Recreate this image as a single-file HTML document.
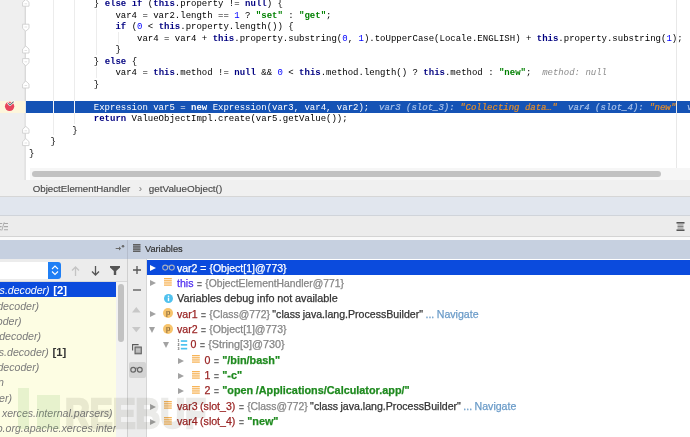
<!DOCTYPE html>
<html><head><meta charset="utf-8">
<style>
*{margin:0;padding:0;box-sizing:border-box}
html,body{width:690px;height:437px;overflow:hidden;background:#fff;position:relative}
body>*{will-change:transform}
.a{position:absolute}
#ed{left:0;top:0;width:690px;height:180px;background:#fff;overflow:hidden}
#gut{left:0;top:0;width:25px;height:180px;background:#efefef;border-right:1px solid #e6e6e6}
.ln{position:absolute;left:29px;height:11.5px;line-height:11.5px;padding-top:1.7px;font-family:"Liberation Mono",monospace;font-size:9px;color:#000;white-space:pre}
.k{color:#000080;font-weight:bold}
.n{color:#0000ff}
.s{color:#008000;font-weight:bold}
.h{color:#8c8c8c;font-style:italic}
.guide{position:absolute;width:1px;background:#ececec}
.sel{left:26px;top:101px;width:664px;height:11.5px;background:#1553b5}
.ui{font-family:"Liberation Sans",sans-serif}
</style></head><body>
<div id="ed" class="a">
  <div id="gut" class="a"></div>
  <div class="a" style="left:0;top:101px;width:25px;height:11.5px;background:#fdf6dc"></div>
  <div class="a sel"></div>
  <!-- indent guides -->
  <div class="guide" style="left:52.5px;top:0;height:135px"></div>
  <div class="guide" style="left:74px;top:0;height:124px"></div><div class="a" style="left:74px;top:101px;width:1px;height:11.5px;background:rgba(255,255,255,0.5)"></div><div class="a" style="left:52.5px;top:101px;width:1px;height:11.5px;background:rgba(255,255,255,0.5)"></div>
  <div class="guide" style="left:96px;top:9px;height:46px"></div>
  <div class="guide" style="left:96px;top:66.5px;height:11.5px"></div>
  <div class="guide" style="left:118px;top:32px;height:11.5px"></div>
  <!-- right margin -->
  <div class="guide" style="left:676.3px;top:0;height:168px;background:#e8e8e8"></div>

  <div class="ln" style="top:-2.5px">            } <span class="k">else if</span> (<span class="k">this</span>.property != <span class="k">null</span>) {</div>
  <div class="ln" style="top:9px">                var4 = var2.length == <span class="n">1</span> ? <span class="s">"set"</span> : <span class="s">"get"</span>;</div>
  <div class="ln" style="top:20.5px">                <span class="k">if</span> (<span class="n">0</span> &lt; <span class="k">this</span>.property.length()) {</div>
  <div class="ln" style="top:32px">                    var4 = var4 + <span class="k">this</span>.property.substring(<span class="n">0</span>, <span class="n">1</span>).toUpperCase(Locale.ENGLISH) + <span class="k">this</span>.property.substring(<span class="n">1</span>);</div>
  <div class="ln" style="top:43.5px">                }</div>
  <div class="ln" style="top:55px">            } <span class="k">else</span> {</div>
  <div class="ln" style="top:66.5px">                var4 = <span class="k">this</span>.method != <span class="k">null</span> &amp;&amp; <span class="n">0</span> &lt; <span class="k">this</span>.method.length() ? <span class="k">this</span>.method : <span class="s">"new"</span>;  <span class="h">method: null</span></div>
  <div class="ln" style="top:78px">            }</div>
  <div class="ln" style="top:101px;color:#fff">            Expression var5 = <b>new</b> Expression(var3, var4, var2);  <span style="font-style:italic;color:#a9c2ea;margin-left:-1px;-webkit-text-stroke:0.2px currentColor">var3 (slot_3): <span style="color:#e58e2a">"Collecting data…"</span>  var4 (slot_4): <span style="color:#e58e2a">"new"</span>  v</span></div>
  <div class="ln" style="top:112.5px">            <span class="k">return</span> ValueObjectImpl.create(var5.getValue());</div>
  <div class="ln" style="top:124px">        }</div>
  <div class="ln" style="top:135.5px">    }</div>
  <div class="ln" style="top:147px">}</div>

  <!-- breakpoint -->
  <svg class="a" style="left:0;top:98px" width="25" height="16" viewBox="0 0 25 16"><circle cx="9.6" cy="8.35" r="4.65" fill="#e8455b"/><path d="M8.3 5.2L10 6.9L13.6 3.6" fill="none" stroke="#fff" stroke-width="2.2" stroke-linecap="round" stroke-linejoin="round"/><path d="M8.3 5.2L10 6.9L13.6 3.6" fill="none" stroke="#6b7272" stroke-width="1.1"/></svg>
  <!-- fold outline -->
  <div class="a" style="left:25px;top:0;width:1px;height:180px;background:#e3e3e3"></div>
  <div class="a" style="left:25px;top:0;width:1px;height:101px;background:#d9d9d9"></div>
  <div class="a" style="left:25px;top:133px;width:1px;height:6px;background:#d9d9d9"></div>
  <svg class="a" style="left:21.5px;top:0" width="8" height="150" viewBox="0 0 8 150">
    <g fill="#fff" stroke="#cfcfcf" stroke-width="0.9">
      <path d="M0.6 6.2V2.2L3.8 -0.6L7 2.2V6.2Z"/>
      <path d="M0.6 24.2V28.4L3.8 31.2L7 28.4V24.2Z"/>
      <path d="M0.6 53V49L3.8 46L7 49V53Z"/>
      <path d="M0.6 58.6V62.8L3.8 65.8L7 62.8V58.6Z"/>
      <path d="M0.6 88V84L3.8 81L7 84V88Z"/>
      <path d="M0.6 133.2V129.2L3.8 126.4L7 129.2V133.2Z"/>
      <path d="M0.6 145.6V141.6L3.8 138.6L7 141.6V145.6Z"/>
    </g>
    <g stroke="#d6d6d6" stroke-width="0.7">
      <path d="M2.5 3.8H5.1M2.5 27H5.1M2.5 50.5H5.1M2.5 61.8H5.1M2.5 85.5H5.1M2.5 130.8H5.1M2.5 143H5.1"/>
    </g>
  </svg>

  <!-- h scrollbar -->
  <div class="a" style="left:29.7px;top:168.2px;width:661px;height:11.4px;background:#f6f6f6"></div>
  <div class="a" style="left:31.6px;top:171px;width:629.4px;height:6.1px;border-radius:3px;background:#c2c2c2"></div>
</div>

<!-- breadcrumb -->
<div class="a ui" style="left:0;top:179.6px;width:690px;height:17.4px;background:#f0f0f0;border-bottom:1px solid #d6d6d6;font-size:9.7px;color:#4a4a4a;line-height:16px;-webkit-text-stroke:0.15px #4a4a4a">
  <span class="a" style="left:32.8px;top:1.1px">ObjectElementHandler</span>
  <span class="a" style="left:139px;top:1.1px;color:#999;font-size:9px">›</span>
  <span class="a" style="left:148.8px;top:1.1px;font-size:9.9px">getValueObject()</span>
</div>
<!-- toolbar 1 -->
<div class="a" style="left:0;top:197px;width:690px;height:19px;background:#e1e6ee;border-bottom:1px solid #d0d4da"></div>
<!-- toolbar 2 -->
<div class="a" style="left:0;top:216px;width:690px;height:21px;background:#ececec;border-bottom:1px solid #d4d4d4"></div>
<!-- header -->
<div class="a" style="left:0;top:237px;width:690px;height:3px;background:#fafafa"></div>
<div class="a ui" style="left:0;top:240px;width:690px;height:19px;background:#c6d0e0"></div>
<div class="a" style="left:126.5px;top:240px;width:1px;height:19px;background:#b4bccb"></div><div class="a" style="left:126.5px;top:259px;width:1px;height:178px;background:#cfcfcf"></div>
<span class="a ui" style="left:145px;top:242px;font-size:9.2px;line-height:14px;color:#333;-webkit-text-stroke:0.2px #333">Variables</span>

<!-- frames toolbar -->
<div class="a" style="left:0;top:259px;width:126.5px;height:23px;background:#ececec;border-bottom:1px solid #d8d8d8"></div>
<div class="a" style="left:0;top:262px;width:48px;height:16.5px;background:#fff"></div>
<div class="a" style="left:48px;top:262px;width:13px;height:16.5px;background:#1f7ff5;border-radius:0 3px 3px 0"></div>
<!-- frames list -->
<div class="a" style="left:0;top:282px;width:116px;height:155px;background:#fdfde3"></div>
<div class="a" style="left:0;top:282.2px;width:116px;height:15.2px;background:#0b4bdd"></div>
<style>
.fr{position:absolute;left:0;height:15.33px;line-height:15.33px;padding-top:0.8px;display:flex;justify-content:flex-end;overflow:hidden;white-space:pre;font-family:"Liberation Sans",sans-serif;font-size:10.6px;font-style:italic;color:#7a7a7a}
.fr b{font-style:normal;color:#333;font-size:11.3px;margin-left:0.6px}
</style>
<div class="fr" style="top:282.2px;width:67px;color:#fff">com.sun.beans.decoder) <b style="color:#fff">[2]</b></div>
<div class="fr" style="top:297.5px;width:39px">(com.sun.beans.decoder)</div>
<div class="fr" style="top:312.8px;width:21.5px">(com.sun.beans.decoder)</div>
<div class="fr" style="top:328.2px;width:41px">(com.sun.beans.decoder)</div>
<div class="fr" style="top:343.5px;width:66.2px">com.sun.beans.decoder) <b>[1]</b></div>
<div class="fr" style="top:358.8px;width:39.3px">(com.sun.beans.decoder)</div>
<div class="fr" style="top:374.2px;width:4px">(java.lang.reflect.Method.invokin</div>
<div class="fr" style="top:389.5px;width:12px">(sun.reflect.misc.Trampoliner)</div>
<div class="fr" style="top:404.8px;width:112.6px">(com.sun.org.apache  xerces.internal.parsers)</div>
<div class="fr" style="top:420.2px;width:116px;justify-content:flex-start;overflow:hidden"><span style="margin-left:-3.3px">o.org.apache.xerces.internal.parsers)</span></div>

<div class="a" style="left:116px;top:282px;width:10.5px;height:155px;background:#f2f2f2"></div>
<div class="a" style="left:118px;top:284px;width:6px;height:58px;border-radius:3px;background:#c2c2c2"></div>

<!-- var toolbar -->
<div class="a" style="left:127.5px;top:259px;width:19px;height:178px;background:#ececec;border-right:1px solid #d6d6d6"></div>
<div class="a" style="left:128.5px;top:362px;width:16.5px;height:15.5px;background:#d4d4d4;border-radius:2px"></div>


<!-- toolbar2 icons -->
<svg class="a" style="left:0;top:218px" width="10" height="16" viewBox="0 0 10 16"><path d="M0 5.5H2.2M4 5.5H8M0 8.6H1.6M4 8.6H8M0 11.7H1.2M4 11.7H8" stroke="#a8a8a8" stroke-width="1.1"/><path d="M4.2 4.3L1.8 12.5" stroke="#a8a8a8" stroke-width="0.9"/></svg>
<svg class="a" style="left:676px;top:222px" width="9" height="9" viewBox="0 0 9 9"><rect x="0.5" y="0" width="8" height="1.6" fill="#555"/><rect x="0.5" y="7.4" width="8" height="1.6" fill="#555"/><path d="M1.5 3H7.5M1.5 4.5H7.5M1.5 6H7.5" stroke="#777" stroke-width="0.9"/></svg>
<!-- header icons -->
<svg class="a" style="left:115px;top:244px" width="10" height="8" viewBox="0 0 10 8"><path d="M0.7 4.5H4.5" stroke="#6a6a6a" stroke-width="1"/><path d="M4 2.4L6.2 4.5L4 6.6Z" fill="#6a6a6a"/><circle cx="8" cy="2.2" r="1.3" fill="#6a6a6a"/></svg>
<svg class="a" style="left:132.8px;top:244.3px" width="8" height="8" viewBox="0 0 8 8"><g fill="#5f5f5f"><rect x="0" y="0" width="7.5" height="1.6"/><rect x="0" y="2.15" width="7.5" height="1.6"/><rect x="0" y="4.3" width="7.5" height="1.6"/><rect x="0" y="6.45" width="7.5" height="1.6"/></g></svg>
<!-- combobox chevrons -->
<svg class="a" style="left:50.5px;top:264.5px" width="8" height="11" viewBox="0 0 8 11"><path d="M1 4L4 1L7 4M1 6.5L4 9.5L7 6.5" fill="none" stroke="#fff" stroke-width="1.1"/></svg>
<!-- frames toolbar arrows -->
<svg class="a" style="left:71px;top:265.5px" width="9" height="10" viewBox="0 0 9 10"><path d="M4.5 1V10M1 4.5L4.5 1L8 4.5" fill="none" stroke="#c4c4c4" stroke-width="1.3"/></svg>
<svg class="a" style="left:90.8px;top:265.5px" width="9" height="10" viewBox="0 0 9 10"><path d="M4.5 0V9M1 5.5L4.5 9L8 5.5" fill="none" stroke="#555" stroke-width="1.3"/></svg>
<svg class="a" style="left:109.8px;top:266px" width="10" height="9" viewBox="0 0 10 9"><path d="M0 0H10V1.6L6.2 5V9H3.8V5L0 1.6Z" fill="#555"/></svg>
<!-- var toolbar icons -->
<svg class="a" style="left:132.5px;top:266px" width="8" height="8" viewBox="0 0 8 8"><path d="M4 0V8M0 4H8" stroke="#555" stroke-width="1.3"/></svg>
<svg class="a" style="left:132.5px;top:288.8px" width="8" height="2" viewBox="0 0 8 2"><path d="M0 1H8" stroke="#555" stroke-width="1.3"/></svg>
<svg class="a" style="left:132.2px;top:307.4px" width="9" height="6" viewBox="0 0 9 6"><path d="M0 5.5L4.3 0L8.6 5.5Z" fill="#c8c8c8"/></svg>
<svg class="a" style="left:132.2px;top:327.3px" width="9" height="6" viewBox="0 0 9 6"><path d="M0 0L4.3 5.2L8.6 0Z" fill="#c8c8c8"/></svg>
<svg class="a" style="left:131.5px;top:343.8px" width="10" height="10.5" viewBox="0 0 10 10.5"><path d="M0.6 6.5V0.6H6.6" fill="none" stroke="#5a5a5a" stroke-width="1.1"/><rect x="3" y="3" width="6.3" height="6.8" fill="#a8a8a8" stroke="#5a5a5a" stroke-width="1"/><path d="M4 5.2H8.3M4 7H8.3" stroke="#eee" stroke-width="0.6"/></svg>
<svg class="a" style="left:129.8px;top:366.3px" width="13" height="7" viewBox="0 0 13 7"><circle cx="3.2" cy="3.7" r="2.4" fill="none" stroke="#666" stroke-width="1.2"/><circle cx="9.8" cy="3.7" r="2.4" fill="none" stroke="#666" stroke-width="1.2"/><path d="M5.6 2.5 Q6.5 1.7 7.4 2.5" fill="none" stroke="#666" stroke-width="1"/></svg>

<!-- var tree -->
<div class="a" style="left:146.5px;top:259.5px;width:544px;height:15.3px;background:#0b4bdd"></div>
<div id="tree" class="a ui" style="left:0;top:0;width:690px;height:437px;font-size:10.6px">
<style>
.r{position:absolute;height:15.33px;line-height:15.33px;padding-top:1.2px;white-space:pre;color:#333;word-spacing:-0.5px;-webkit-text-stroke:0.25px currentColor}
.arr{position:absolute;width:0;height:0;border-style:solid;border-color:transparent}
.ar{border-width:3.2px 0 3.2px 6.2px;border-left-color:#a2a2a2}
.ad{border-width:6px 3.6px 0 3.6px;border-top-color:#a2a2a2}
.nm{color:#9a2424}
.gv{color:#858585;font-size:10.35px}
.eq{color:#707070;word-spacing:0;font-size:8.4px;font-weight:bold;padding:0 1px 0 1.2px}
.str{color:#1f8a1f;font-weight:bold;font-size:10.85px}
.stripes{position:absolute;width:8px;height:8.5px;background:repeating-linear-gradient(to bottom,#f9b45c 0,#f9b45c 1.6px,transparent 1.6px,transparent 2.4px)}
.picon{position:absolute;width:10px;height:10px;border-radius:50%;background:#f7c46c;color:#6a5232;font-size:8px;line-height:10px;text-align:center;font-family:"Liberation Sans",sans-serif}
</style>
<!-- row0 selected var2 -->
<div class="arr ar" style="left:149.6px;top:264.5px;border-left-color:#fff;border-width:3.3px 0 3.3px 6.4px"></div>
<svg class="a" style="left:161.5px;top:264px" width="13" height="7" viewBox="0 0 13 7"><circle cx="3.2" cy="3.6" r="2.5" fill="none" stroke="#a6aec0" stroke-width="1.1"/><circle cx="9.8" cy="3.6" r="2.5" fill="none" stroke="#a6aec0" stroke-width="1.1"/><path d="M5.6 2.6 Q6.5 1.8 7.4 2.6" fill="none" stroke="#a6aec0" stroke-width="1"/></svg>
<div class="r" style="left:177px;top:259.5px;color:#fff;word-spacing:0;font-size:10.5px">var2 = {Object[1]@773}</div>
<!-- row1 this -->
<div class="arr ar" style="left:149.5px;top:280.3px"></div>
<svg class="a" style="left:164.3px;top:278.2px" width="8" height="9" viewBox="0 0 8 9"><g fill="#f7b457"><rect x="0" y="0" width="7.8" height="1.3"/><rect x="0" y="2.15" width="7.8" height="1.3"/><rect x="0" y="4.3" width="7.8" height="1.3"/><rect x="0" y="6.45" width="7.8" height="1.3"/></g></svg>
<div class="r" style="left:177px;top:274.83px"><span style="color:#4f2ef0">this</span><span class="eq"> = </span><span class="gv">{ObjectElementHandler@771}</span></div>
<!-- row2 info -->
<svg class="a" style="left:163.5px;top:293.5px" width="9" height="9" viewBox="0 0 9 9"><circle cx="4.5" cy="4.5" r="4.5" fill="#4fc1ee"/><rect x="3.8" y="3.6" width="1.4" height="3.6" fill="#fff"/><circle cx="4.5" cy="2.3" r="0.8" fill="#fff"/></svg>
<div class="r" style="left:177px;top:290.16px;font-size:10.85px;word-spacing:-0.3px">Variables debug info not available</div>
<!-- row3 var1 -->
<div class="arr ar" style="left:149.5px;top:311px"></div>
<div class="picon" style="left:163.3px;top:308.4px">p</div>
<div class="r" style="left:177px;top:305.5px"><span class="nm">var1</span><span class="eq"> = </span><span class="gv">{Class@772}</span> "class java.lang.ProcessBuilder" <span style="color:#6a9bc8">... Navigate</span></div>
<!-- row4 var2 -->
<div class="arr ad" style="left:149px;top:327px"></div>
<div class="picon" style="left:163.3px;top:323.7px">p</div>
<div class="r" style="left:177px;top:320.83px"><span class="nm">var2</span><span class="eq"> = </span><span class="gv" style="font-size:10.5px">{Object[1]@773}</span></div>
<!-- row5 0 array -->
<div class="arr ad" style="left:163px;top:342px"></div>
<svg class="a" style="left:176.5px;top:339px" width="11" height="11" viewBox="0 0 11 11"><g fill="#4cc2ef"><rect x="3.8" y="1.2" width="6.4" height="1.7"/><rect x="3.8" y="5" width="6.4" height="1.7"/><rect x="3.8" y="8.8" width="6.4" height="1.7"/></g><g font-family="Liberation Sans" font-size="3.6" font-weight="bold" fill="#555"><text x="0.4" y="3.2">1</text><text x="0.4" y="7">2</text><text x="0.4" y="10.8">3</text></g></svg>
<div class="r" style="left:190.5px;top:336.16px"><span class="nm">0</span><span class="eq"> = </span><span class="gv" style="font-size:10.8px">{String[3]@730}</span></div>
<!-- row6 -->
<div class="arr ar" style="left:177.5px;top:357.5px"></div>
<svg class="a" style="left:191.8px;top:355.2px" width="8" height="9" viewBox="0 0 8 9"><g fill="#f7b457"><rect x="0" y="0" width="7.8" height="1.3"/><rect x="0" y="2.15" width="7.8" height="1.3"/><rect x="0" y="4.3" width="7.8" height="1.3"/><rect x="0" y="6.45" width="7.8" height="1.3"/></g></svg>
<div class="r" style="left:204.5px;top:351.5px"><span class="nm">0</span><span class="eq"> = </span><span class="str">"/bin/bash"</span></div>
<!-- row7 -->
<div class="arr ar" style="left:177.5px;top:372.8px"></div>
<svg class="a" style="left:191.8px;top:370.5px" width="8" height="9" viewBox="0 0 8 9"><g fill="#f7b457"><rect x="0" y="0" width="7.8" height="1.3"/><rect x="0" y="2.15" width="7.8" height="1.3"/><rect x="0" y="4.3" width="7.8" height="1.3"/><rect x="0" y="6.45" width="7.8" height="1.3"/></g></svg>
<div class="r" style="left:204.5px;top:366.83px"><span class="nm">1</span><span class="eq"> = </span><span class="str">"-c"</span></div>
<!-- row8 -->
<div class="arr ar" style="left:177.5px;top:388.2px"></div>
<svg class="a" style="left:191.8px;top:385.9px" width="8" height="9" viewBox="0 0 8 9"><g fill="#f7b457"><rect x="0" y="0" width="7.8" height="1.3"/><rect x="0" y="2.15" width="7.8" height="1.3"/><rect x="0" y="4.3" width="7.8" height="1.3"/><rect x="0" y="6.45" width="7.8" height="1.3"/></g></svg>
<div class="r" style="left:204.5px;top:382.16px"><span class="nm">2</span><span class="eq"> = </span><span class="str">"open /Applications/Calculator.app/"</span></div>
<!-- row9 var3 -->
<div class="arr ar" style="left:149.5px;top:403.5px"></div>
<svg class="a" style="left:164.3px;top:401.2px" width="8" height="9" viewBox="0 0 8 9"><g fill="#f7b457"><rect x="0" y="0" width="7.8" height="1.3"/><rect x="0" y="2.15" width="7.8" height="1.3"/><rect x="0" y="4.3" width="7.8" height="1.3"/><rect x="0" y="6.45" width="7.8" height="1.3"/></g></svg>
<div class="r" style="left:177px;top:397.5px"><span class="nm">var3 (slot_3)</span><span class="eq"> = </span><span class="gv">{Class@772}</span> "class java.lang.ProcessBuilder" <span style="color:#6a9bc8">... Navigate</span></div>
<!-- row10 var4 -->
<div class="arr ar" style="left:149.5px;top:418.8px"></div>
<svg class="a" style="left:164.3px;top:416.5px" width="8" height="9" viewBox="0 0 8 9"><g fill="#f7b457"><rect x="0" y="0" width="7.8" height="1.3"/><rect x="0" y="2.15" width="7.8" height="1.3"/><rect x="0" y="4.3" width="7.8" height="1.3"/><rect x="0" y="6.45" width="7.8" height="1.3"/></g></svg>
<div class="r" style="left:177px;top:412.83px"><span class="nm">var4 (slot_4)</span><span class="eq"> = </span><span class="str">"new"</span></div>
</div>


<!-- watermark -->
<div class="a" style="left:18px;top:388px;width:10.7px;height:41.3px;background:rgba(110,180,80,0.15)"></div>
<div class="a" style="left:37.1px;top:395.4px;width:23.2px;height:33.9px;background:rgba(110,180,80,0.15)"></div>
<svg class="a" style="left:0;top:380px" width="230" height="57" viewBox="0 0 230 57"><g opacity="0.1"><text x="65" y="47.5" font-family="Liberation Sans" font-weight="bold" font-size="42" textLength="141" lengthAdjust="spacingAndGlyphs" fill="#3c3c28" stroke="#3c3c28" stroke-width="2.6" stroke-linejoin="miter">REEBUF</text></g></svg>
</body></html>
